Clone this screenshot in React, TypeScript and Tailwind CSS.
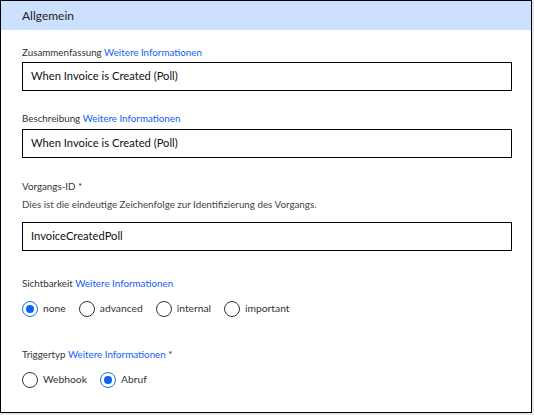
import { useState } from "react";

const font = { fontFamily: 'Lato, "Noto Sans", sans-serif' };

function Label({ text, required }: { text: string; required?: boolean }) {
  return (
    <div className="text-[9.8px] leading-[14px] text-[#333]">
      {text} <span className="text-[#1560f5]">Weitere Informationen</span>
      {required && <span> *</span>}
    </div>
  );
}

function TextBox({ value }: { value: string }) {
  return (
    <div className="h-[29px] w-[490px] border border-black bg-white px-2 flex items-center text-[11.2px] text-[#111]">
      {value}
    </div>
  );
}

function Radio({ label, checked, onClick }: { label: string; checked: boolean; onClick: () => void }) {
  return (
    <button type="button" onClick={onClick} className="flex items-center gap-[5px] text-[10.3px] text-[#333]">
      {checked ? (
        <span className="flex h-4 w-4 items-center justify-center rounded-full border-[1.5px] border-[#1a6ff0]">
          <span className="h-2 w-2 rounded-full bg-[#0a62f5]" />
        </span>
      ) : (
        <span className="h-4 w-4 rounded-full border-[1.5px] border-[#333]" />
      )}
      <span>{label}</span>
    </button>
  );
}

export default function App() {
  const [vis, setVis] = useState("none");
  const [trigger, setTrigger] = useState("Abruf");

  return (
    <div className="h-[415px] w-[534px] bg-[#e6e6e6]" style={font}>
      <div className="h-[413px] w-[532px] border border-black bg-white">
        <div className="h-[29px] bg-[#cce0ff] pl-[21px] flex items-center text-[12px] text-[#222]">
          Allgemein
        </div>
        <div className="px-[21px]">
          <div className="mt-[15px]">
            <Label text="Zusammenfassung" />
            <div className="mt-[3px]">
              <TextBox value="When Invoice is Created (Poll)" />
            </div>
          </div>
          <div className="mt-[20px]">
            <Label text="Beschreibung" />
            <div className="mt-[4px]">
              <TextBox value="When Invoice is Created (Poll)" />
            </div>
          </div>
          <div className="mt-[21px]">
            <div className="text-[9.8px] leading-[14px] text-[#333]">Vorgangs-ID *</div>
            <div className="mt-[4px] text-[9.8px] leading-[14px] text-[#444]">
              Dies ist die eindeutige Zeichenfolge zur Identifizierung des Vorgangs.
            </div>
            <div className="mt-[11px]">
              <TextBox value="InvoiceCreatedPoll" />
            </div>
          </div>
          <div className="mt-[25px]">
            <Label text="Sichtbarkeit" />
            <div className="mt-[11px] flex gap-[13px]">
              {["none", "advanced", "internal", "important"].map((v) => (
                <Radio key={v} label={v} checked={vis === v} onClick={() => setVis(v)} />
              ))}
            </div>
          </div>
          <div className="mt-[30px]">
            <Label text="Triggertyp" required />
            <div className="mt-[11px] flex gap-[13px]">
              {["Webhook", "Abruf"].map((v) => (
                <Radio key={v} label={v} checked={trigger === v} onClick={() => setTrigger(v)} />
              ))}
            </div>
          </div>
        </div>
      </div>
    </div>
  );
}
